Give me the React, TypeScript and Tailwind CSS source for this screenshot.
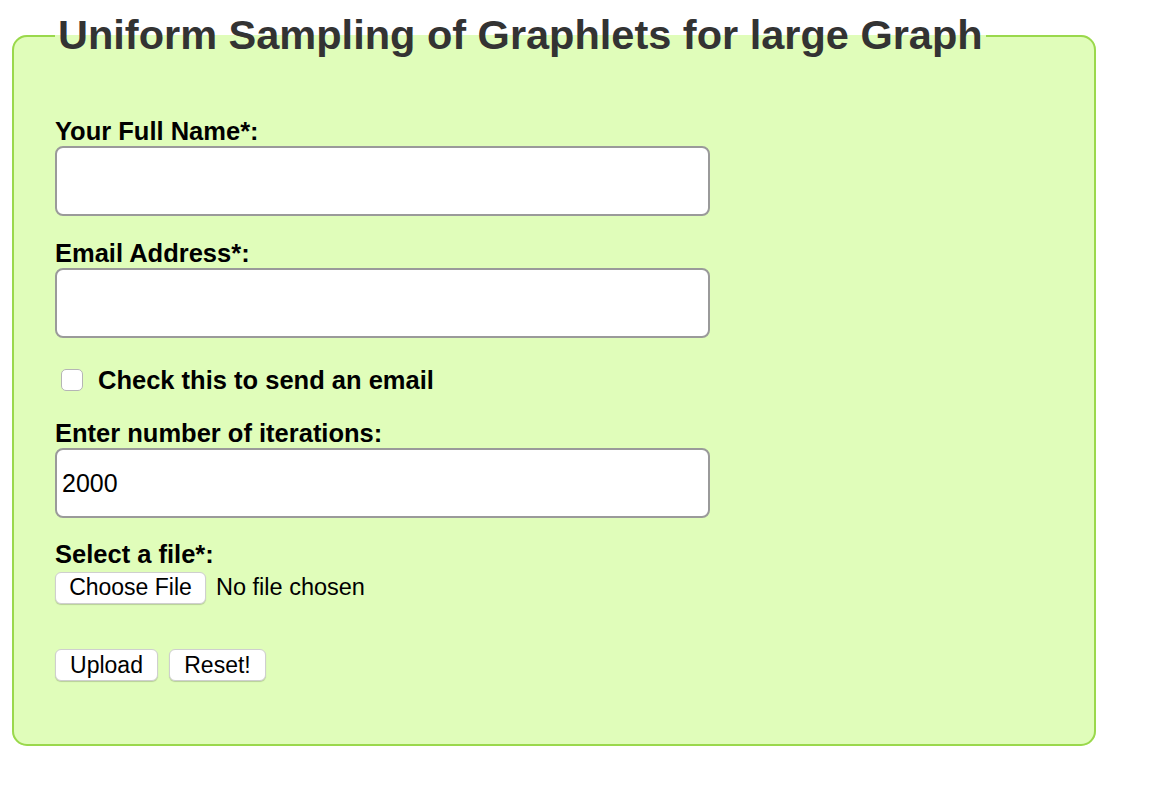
import React from 'react';

const labelCls = "block text-[25.5px] leading-[28px] font-bold text-black";
const inputCls =
  "block w-[655px] h-[70px] mt-[1px] px-[5px] bg-white border-2 border-[#9a9a9a] rounded-[8px] text-[25px] text-black outline-none";
const btnCls =
  "h-[32px] bg-white border border-[#cfcfcf] rounded-[6px] shadow-[0_1px_1px_rgba(0,0,0,0.18)] text-[23px] leading-none text-black";

const App: React.FC = () => {
  return (
    <div className="min-h-[802px] bg-white font-['Liberation_Sans',Arial,sans-serif] pt-[9px]">
      <form onSubmit={(e) => e.preventDefault()}>
        <fieldset className="ml-[12px] w-[1084px] border-2 border-[#9ad84c] rounded-[15px] bg-[#e0fdba] pl-[41px] pt-[54px] pb-[63px]">
          <legend className="px-[3px] pt-[2px] pb-[4px] text-[41.5px] leading-[48px] font-bold text-[#333]">
            Uniform Sampling of Graphlets for large Graph
          </legend>

          <label className={labelCls}>Your Full Name*:</label>
          <input type="text" className={inputCls} />

          <label className={`${labelCls} mt-[23px]`}>Email Address*:</label>
          <input type="email" className={inputCls} />

          <div className="flex items-center h-[28px] mt-[28px]">
            <span className="ml-[6px] w-[22px] h-[22px] bg-white border border-[#b5b5b5] rounded-[5px]" />
            <span className="ml-[15px] text-[25.5px] font-bold text-black">Check this to send an email</span>
          </div>

          <label className={`${labelCls} mt-[25px]`}>Enter number of iterations:</label>
          <input type="text" defaultValue="2000" className={inputCls} />

          <label className={`${labelCls} mt-[22px]`}>Select a file*:</label>
          <div className="flex items-center mt-[2px]">
            <button type="button" className={`${btnCls} w-[151px]`}>Choose File</button>
            <span className="ml-[10px] text-[23.5px] text-black">No file chosen</span>
          </div>

          <div className="flex gap-[11px] mt-[44px]">
            <button type="submit" className={`${btnCls} w-[103px]`}>Upload</button>
            <button type="reset" className={`${btnCls} w-[97px]`}>Reset!</button>
          </div>
        </fieldset>
      </form>
    </div>
  );
};

export default App;
